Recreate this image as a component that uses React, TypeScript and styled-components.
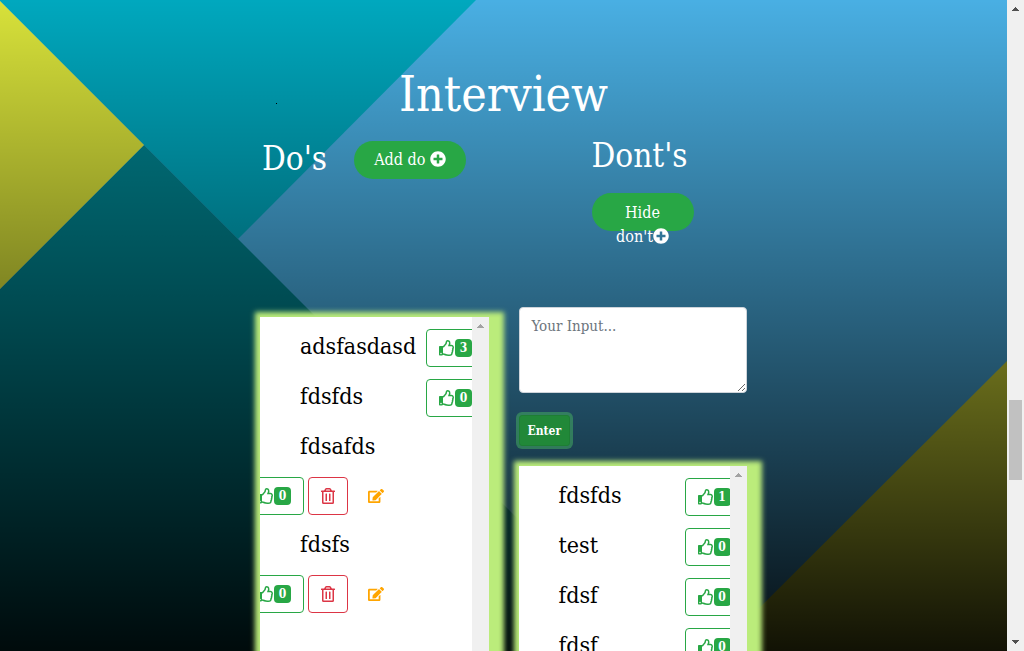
import React from "react";
import styled, { createGlobalStyle, css } from "styled-components";
import { FaEdit, FaPlusCircle, FaRegTrashAlt } from "react-icons/fa";

const GlobalStyle = createGlobalStyle`
  *, *::before, *::after { box-sizing: border-box; }
  body {
    margin: 0;
    font-family: "DejaVu Serif Condensed", "DejaVu Serif", serif;
    font-size: 15px;
    line-height: 24px;
    color: #000;
  }
  h1, h2, ul { margin: 0; padding: 0; font-weight: 400; }
  button, textarea { font: inherit; }
`;

const Shell = styled.div`
  position: relative;
  display: grid;
  grid-template-columns: minmax(0, 1fr) 17px;
  height: 100vh;
  overflow: hidden;
`;

const Scene = styled.div`
  position: relative;
  overflow: hidden;
`;

const Backdrop = styled.svg`
  position: absolute;
  inset: 0;
  width: 100%;
  height: 100%;
`;

const Content = styled.main`
  position: relative;
  width: 100%;
  max-width: 517px;
  margin: 0 auto;
  padding-top: 64px;
`;

const TitleRow = styled.header`
  display: grid;
  grid-template-columns: 1fr auto 1fr;
  align-items: start;
  height: 72px;
`;

const Dot = styled.span`
  width: 1px;
  height: 1px;
  margin: 39px 0 0 31px;
  background: #000;
`;

const Title = styled.h1`
  font-size: 48px;
  line-height: 60px;
  color: #fff;
`;

const Columns = styled.div`
  display: grid;
  grid-template-columns: 1fr 1fr;
`;

const Column = styled.section`
  min-width: 0;
  padding: 0 15px;
`;

const Head = styled.div<{ $stacked?: boolean }>`
  display: flex;
  height: 171px;
  ${(p) =>
    p.$stacked
      ? css`
          flex-direction: column;
          align-items: flex-start;
          gap: 17px;
          padding-left: 73px;
        `
      : css`
          align-items: flex-start;
          gap: 27px;
          padding: 3px 0 0 2px;
        `}
`;

const Heading = styled.h2`
  font-size: 33px;
  line-height: 40px;
  color: #fff;
`;

const PillButton = styled.button<{ $narrow?: boolean }>`
  width: ${(p) => (p.$narrow ? "102px" : "112px")};
  height: 38px;
  padding: ${(p) => (p.$narrow ? "8px 24px" : "7px 0")};
  display: block;
  border: 0;
  border-radius: 19px;
  background: #28a745;
  color: #fff;
  font-size: 16px;
  line-height: 24px;
  white-space: nowrap;
  ${(p) => !p.$narrow && "margin-top: 2px;"}
  svg { font-size: 16px; vertical-align: -2px; }
`;

const PillLabel = styled.span`
  display: block;
  height: 24px;
`;

const Input = styled.textarea`
  display: block;
  width: 100%;
  height: 86px;
  padding: 6px 12px;
  border: 1px solid #ced4da;
  border-radius: 4px;
  background: #fff;
  resize: both;
  &::placeholder { color: #6c757d; opacity: 1; }
`;

const EnterButton = styled.button`
  display: block;
  height: 31px;
  margin: 22px 0 20px;
  padding: 0 8px;
  border: 1px solid #1e7e34;
  border-radius: 3px;
  background: #218838;
  box-shadow: 0 0 0 3px rgba(72, 180, 97, 0.5);
  color: #fff;
  font-size: 12px;
  font-weight: 700;
`;

const Panel = styled.div<{ $lowered?: boolean }>`
  display: grid;
  grid-template-columns: minmax(0, 1fr) 17px;
  height: 400px;
  margin-top: ${(p) => (p.$lowered ? "10px" : "0")};
  background: #fff;
  box-shadow: 5px 5px 5px 10px #bbec7b;
`;

const List = styled.ul`
  display: flex;
  flex-direction: column;
  gap: 12px;
  padding: 12px 0 0 40px;
  overflow: hidden;
  list-style: none;
`;

const Item = styled.li<{ $wrapped?: boolean }>`
  display: flex;
  flex-direction: ${(p) => (p.$wrapped ? "column" : "row")};
  gap: ${(p) => (p.$wrapped ? "14px" : "0")};
  flex-shrink: 0;
`;

const ItemText = styled.span`
  flex: 0 0 auto;
  min-width: 126px;
  font-size: 23px;
  line-height: 34px;
`;

const Actions = styled.div<{ $wrapped?: boolean }>`
  display: flex;
  flex: none;
  gap: 4px;
  margin-left: ${(p) => (p.$wrapped ? "-55px" : "0")};
`;

const ActionButton = styled.button<{ $tone: string }>`
  display: flex;
  align-items: center;
  justify-content: center;
  flex: none;
  height: 38px;
  padding: 0 12px;
  border: 1px solid ${(p) => p.$tone};
  border-radius: 4px;
  background: transparent;
  color: ${(p) => p.$tone};
  svg { font-size: 16px; flex: none; }
`;

const DeleteButton = styled(ActionButton)`
  width: 40px;
  padding: 0;
`;

const EditButton = styled(DeleteButton)`
  margin-left: 4px;
  border-color: transparent;
`;

const Badge = styled.span`
  width: 17px;
  height: 18px;
  border-radius: 4px;
  background: #28a745;
  color: #fff;
  font-size: 12px;
  font-weight: 700;
  line-height: 18px;
  text-align: center;
`;

const Track = styled.div`
  position: relative;
  display: flex;
  flex-direction: column;
  align-items: center;
  background: #f0f0f0;
`;

const Thumb = styled.div`
  width: 13px;
  height: 13%;
  margin-top: auto;
  background: #c1c1c1;
`;

const ThumbSpace = styled.div`
  display: flex;
  flex-direction: column;
  align-items: center;
  flex: 1;
  &::after { content: ""; flex: 0 0 25%; }
`;

const Arrow = styled.svg`
  display: block;
  flex: none;
  width: 17px;
  height: 17px;
`;

function ScrollArrow({ down, color }: { down?: boolean; color: string }) {
  return (
    <Arrow viewBox="0 0 17 17" shapeRendering="crispEdges" aria-hidden="true">
      <path d={down ? "M5 6h7v1h-1v1h-1v1h-1v1h-1v-1h-1v-1h-1v-1h-1z" : "M8 7h1v1h1v1h1v1h1v1h-7v-1h1v-1h1v-1h1z"} fill={color} />
    </Arrow>
  );
}

function ThumbsUp() {
  return (
    <svg viewBox="0 0 512 512" width="1em" height="1em" fill="currentColor" aria-hidden="true">
      <path d="M466.27 286.69C475.04 271.84 480 256 480 236.85c0-44.015-37.218-85.58-85.82-85.58H357.7c4.92-12.81 8.85-28.13 8.85-46.54C366.55 31.936 328.86 0 271.28 0c-61.607 0-58.093 94.933-71.76 108.6-22.747 22.747-49.615 66.447-68.76 83.4H32c-17.673 0-32 14.327-32 32v240c0 17.673 14.327 32 32 32h64c14.893 0 27.408-10.174 30.978-23.95 44.509 1.001 75.06 39.94 177.802 39.94 7.22 0 15.22.01 22.22.01 77.117 0 111.986-39.423 112.94-95.33 13.319-18.425 20.299-43.122 17.34-66.99 9.854-18.452 13.664-40.343 8.99-62.99zm-61.75 53.83c12.56 21.13 1.26 49.41-13.94 57.57 7.7 48.78-17.608 65.9-53.12 65.9h-37.82c-71.639 0-118.029-37.82-171.64-37.82V240h10.92c28.36 0 67.98-70.89 94.54-97.46 28.36-28.36 18.91-75.63 37.82-94.54 47.27 0 47.27 32.98 47.27 56.72 0 39.17-28.36 56.72-28.36 94.54h103.99c21.11 0 37.73 18.91 37.82 37.82.09 18.9-12.82 37.81-22.27 37.81 13.489 14.555 16.371 45.236-5.21 65.62zM88 432c0 13.255-10.745 24-24 24s-24-10.745-24-24 10.745-24 24-24 24 10.745 24 24z" />
    </svg>
  );
}

type Entry = { text: string; likes: number; wrapped?: boolean };

const dos: Entry[] = [
  { text: "adsfasdasd", likes: 3 },
  { text: "fdsfds", likes: 0 },
  { text: "fdsafds", likes: 0, wrapped: true },
  { text: "fdsfs", likes: 0, wrapped: true },
];

const donts: Entry[] = [
  { text: "fdsfds", likes: 1 },
  { text: "test", likes: 0 },
  { text: "fdsf", likes: 0 },
  { text: "fdsf", likes: 0 },
];

function EntryPanel({ entries, lowered }: { entries: Entry[]; lowered?: boolean }) {
  return (
    <Panel $lowered={lowered}>
      <List>
        {entries.map((e, i) => (
          <Item key={i} $wrapped={e.wrapped}>
            <ItemText>{e.text}</ItemText>
            <Actions $wrapped={e.wrapped}>
              <ActionButton $tone="#28a745" aria-label="Like">
                <ThumbsUp />
                <Badge>{e.likes}</Badge>
              </ActionButton>
              {e.wrapped && (
                <>
                  <DeleteButton $tone="#dc3545" aria-label="Delete">
                    <FaRegTrashAlt />
                  </DeleteButton>
                  <EditButton $tone="#ffa500" aria-label="Edit">
                    <FaEdit />
                  </EditButton>
                </>
              )}
            </Actions>
          </Item>
        ))}
      </List>
      <Track>
        <ScrollArrow color="#a3a3a3" />
      </Track>
    </Panel>
  );
}

export default function App() {
  return (
    <>
      <GlobalStyle />
      <Shell>
        <Scene>
          <Backdrop viewBox="0 0 1007 651" preserveAspectRatio="xMinYMin slice" aria-hidden="true">
            <defs>
              <linearGradient id="shade" x1="0" y1="0" x2="0" y2="1">
                <stop offset="0" stopColor="#000" stopOpacity="0" />
                <stop offset="1" stopColor="#000" stopOpacity="0.92" />
              </linearGradient>
            </defs>
            <rect width="1007" height="651" fill="#49afe3" />
            <path d="M0 0H476L238 239L0 1Z" fill="#00a8be" />
            <path d="M144 145L650 651H0V289Z" fill="#00838f" />
            <path d="M0 1L144 145L0 289Z" fill="#d8e23a" />
            <path d="M1007 361V651H716Z" fill="#d8e038" />
            <rect width="1007" height="651" fill="url(#shade)" />
          </Backdrop>
          <Content>
            <TitleRow>
              <Dot />
              <Title>Interview</Title>
            </TitleRow>
            <Columns>
              <Column>
                <Head>
                  <Heading>Do's</Heading>
                  <PillButton>
                    Add do <FaPlusCircle />
                  </PillButton>
                </Head>
                <EntryPanel entries={dos} lowered />
              </Column>
              <Column>
                <Head $stacked>
                  <Heading>Dont's</Heading>
                  <PillButton $narrow>
                    <PillLabel>Hide</PillLabel>
                    <PillLabel>
                      don't
                      <FaPlusCircle />
                    </PillLabel>
                  </PillButton>
                </Head>
                <Input placeholder="Your Input..." aria-label="Your Input" />
                <EnterButton>Enter</EnterButton>
                <EntryPanel entries={donts} />
              </Column>
            </Columns>
          </Content>
        </Scene>
        <Track>
          <ScrollArrow color="#505050" />
          <ThumbSpace>
            <Thumb />
          </ThumbSpace>
          <ScrollArrow down color="#505050" />
        </Track>
      </Shell>
    </>
  );
}
